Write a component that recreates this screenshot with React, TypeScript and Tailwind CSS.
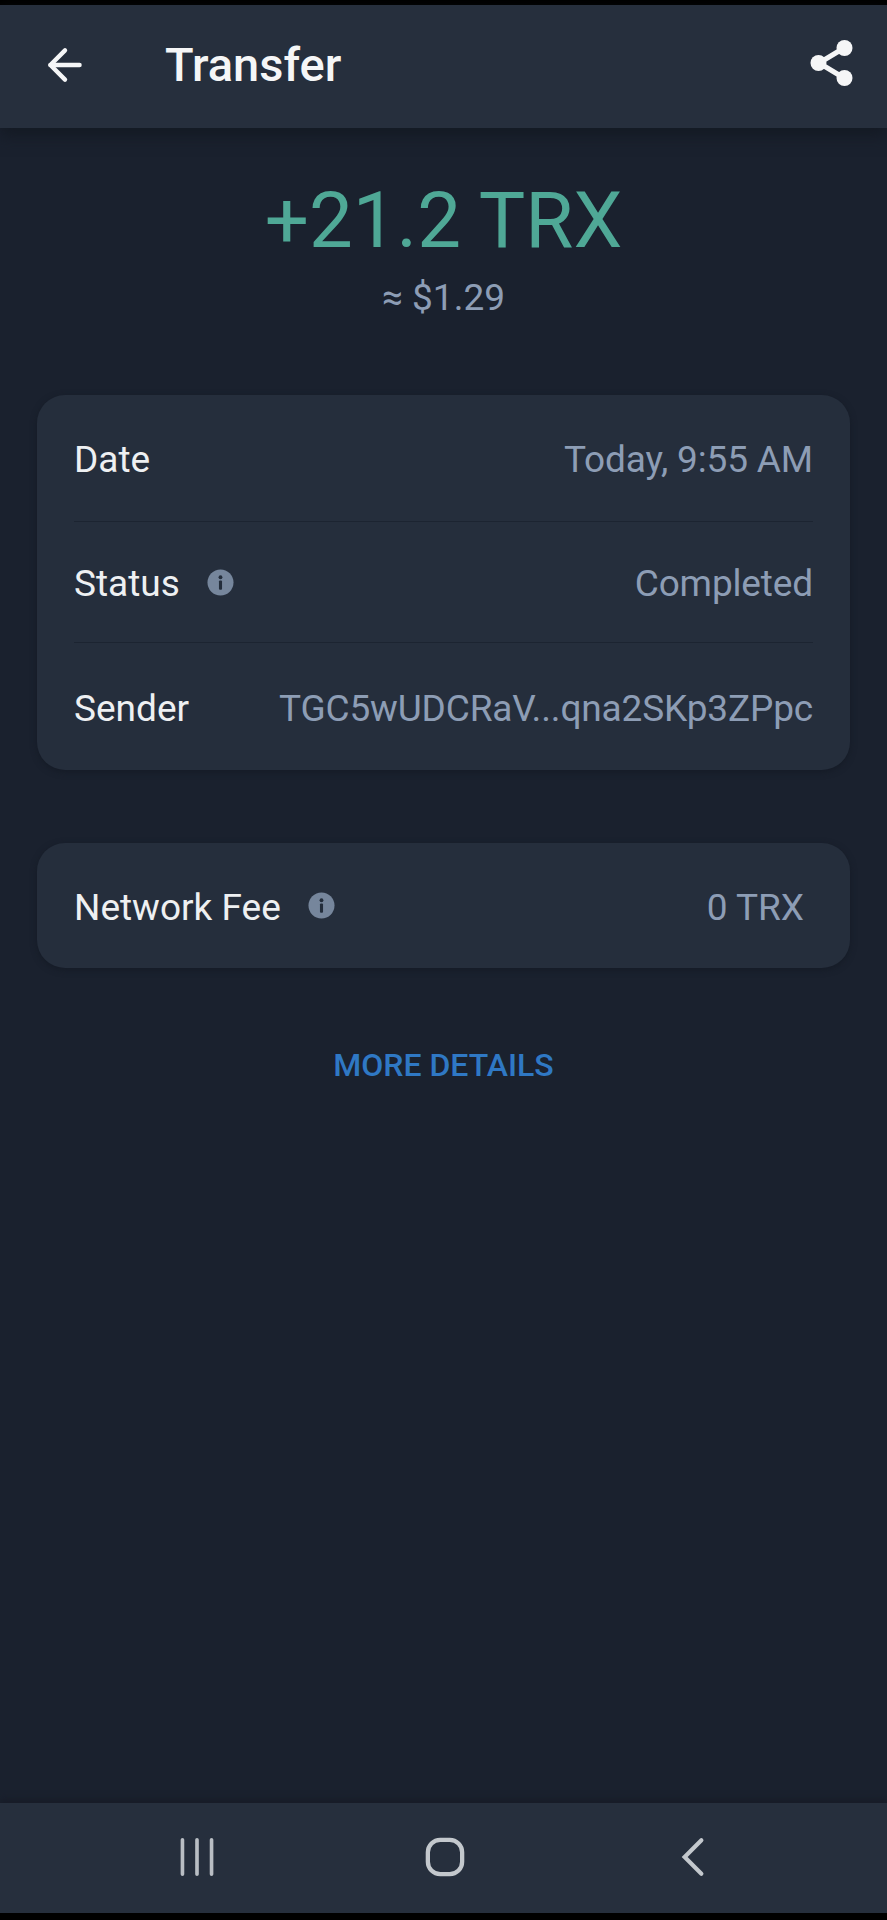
import React from "react";
import { ArrowLeft } from "lucide-react";

const InfoDot = () => (
  <svg viewBox="0 0 28 28" className="-mt-[4px] h-[27px] w-[27px]">
    <circle cx="14" cy="14" r="13.5" fill="#76869c" />
    <circle cx="14" cy="8.5" r="2" fill="#232d3b" />
    <rect x="12.4" y="12" width="3.2" height="9.5" rx="1" fill="#232d3b" />
  </svg>
);

const ShareIcon = () => (
  <svg viewBox="0 0 44 48" className="-mt-[4px] h-[48px] w-[44px]" fill="none">
    <path d="M34 9 L9 24 L34 39" stroke="#f5f6f7" strokeWidth="5" />
    <circle cx="34.5" cy="9" r="8" fill="#f5f6f7" />
    <circle cx="8.5" cy="24" r="8" fill="#f5f6f7" />
    <circle cx="34.5" cy="39" r="8" fill="#f5f6f7" />
  </svg>
);

const Row = ({ label, info, value, className }: { label: string; info?: boolean; value: string; className: string }) => (
  <div className={`flex items-center justify-between pt-[4px] ${className}`}>
    <div className="flex items-center gap-[27px] text-[#eef0f2]">
      <span>{label}</span>
      {info && <InfoDot />}
    </div>
    <span className="tracking-[-0.15px] text-[#8d9db5]">{value}</span>
  </div>
);

export default function App() {
  return (
    <div className="flex h-[1920px] flex-col bg-[#1a212e] font-['Roboto',sans-serif] text-[37px]">
      <div className="h-[5px] shrink-0 bg-black" />
      <header className="flex h-[123px] shrink-0 items-center justify-between bg-[#262f3d] pb-[4px] pl-[40px] pr-[33px] shadow-[0_8px_14px_#141a24]">
        <div className="flex items-center gap-[75px]">
          <ArrowLeft className="h-[50px] w-[50px] text-[#f5f6f7]" strokeWidth={2.1} />
          <h1 className="mt-[2px] text-[47px] font-medium text-[#f5f6f7]">Transfer</h1>
        </div>
        <ShareIcon />
      </header>

      <main className="flex flex-1 flex-col px-[37px]">
        <div className="mt-[48px] text-center text-[78px] leading-[90px] text-[#4fa896]">+21.2 TRX</div>
        <div className="mt-[12px] text-center leading-[40px] text-[#8d9db5]">≈ $1.29</div>

        <section className="mt-[77px] rounded-[28px] bg-[#252e3c] px-[37px] shadow-[0_2px_6px_#151b26]">
          <Row label="Date" value="Today, 9:55 AM" className="h-[127px] border-b border-[#1c2431]" />
          <Row label="Status" info value="Completed" className="h-[121px] border-b border-[#1c2431]" />
          <Row label="Sender" value="TGC5wUDCRaV...qna2SKp3ZPpc" className="h-[127px]" />
        </section>

        <section className="mt-[73px] flex h-[125px] items-center justify-between rounded-[28px] bg-[#252e3c] pl-[37px] pr-[46px] pt-[4px] shadow-[0_2px_6px_#151b26]">
          <div className="flex items-center gap-[27px] text-[#eef0f2]">
            <span>Network Fee</span>
            <InfoDot />
          </div>
          <span className="text-[#8d9db5]">0 TRX</span>
        </section>

        <div className="mt-[79px] text-center text-[32px] font-medium leading-[36px] text-[#2f78c4]">MORE DETAILS</div>
      </main>

      <nav className="flex h-[110px] shrink-0 items-center justify-between bg-[#262f3d] pb-[2px] pl-[178px] pr-[181px] shadow-[0_-4px_6px_#171c28]">
        <svg viewBox="0 0 38 44" className="h-[40px] w-[38px]" stroke="#b9bec4" strokeWidth="4" strokeLinecap="round">
          <path d="M3 3v38M19 3v38M35 3v38" />
        </svg>
        <svg viewBox="0 0 42 42" className="mr-[6px] h-[40px] w-[40px]" fill="none" stroke="#c3c8cd" strokeWidth="4.5">
          <rect x="3" y="3" width="36" height="36" rx="13" />
        </svg>
        <svg viewBox="0 0 28 42" className="h-[40px] w-[26px]" fill="none" stroke="#c3c8cd" strokeWidth="4.5" strokeLinecap="round">
          <path d="M23 3 L5 21 L23 39" />
        </svg>
      </nav>
      <div className="h-[7px] shrink-0 bg-black" />
    </div>
  );
}
